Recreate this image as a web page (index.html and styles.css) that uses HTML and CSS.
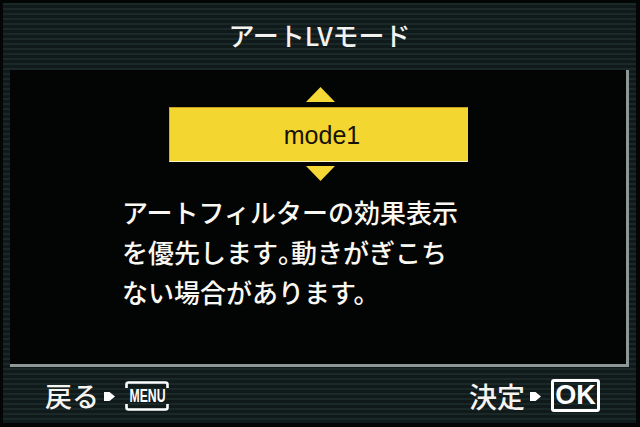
FILE: index.html
```html
<!DOCTYPE html>
<html lang="ja">
<head>
<meta charset="utf-8">
<link rel="stylesheet" href="styles.css">
</head>
<body>
<div class="screen">
  <div class="header">
    <div class="title">アートLVモード</div>
  </div>
  <div class="panel">
    <svg class="tri tri-up" width="29" height="15" viewBox="0 0 29 15"><polygon points="14.5,0 29,15 0,15" fill="#f5d836"/></svg>
    <div class="selector"><span class="sel-text">mode1</span></div>
    <svg class="tri tri-down" width="29" height="15" viewBox="0 0 29 15"><polygon points="0,0 29,0 14.5,15" fill="#f5d836"/></svg>
    <div class="desc">
      <div class="line">アートフィルターの効果表示</div>
      <div class="line">を優先します<span class="half">。</span>動きがぎこち</div>
      <div class="line">ない場合があります。</div>
    </div>
  </div>
  <div class="footer">
    <div class="hint hint-left">
      <span class="hint-label back">戻る</span>
      <svg class="arrow" width="11" height="13" viewBox="0 0 11 13"><polygon points="0,2 5.5,2 11,6.5 5.5,11 0,11" fill="#fff"/></svg>
      <span class="menu-icon">
        <svg class="menu-frame" width="44" height="30" viewBox="0 0 44 30"><path d="M1.5 7 V3.5 Q1.5 1.5 3.5 1.5 H40.5 Q42.5 1.5 42.5 3.5 V7 M1.5 23 V26.5 Q1.5 28.5 3.5 28.5 H40.5 Q42.5 28.5 42.5 26.5 V23" fill="none" stroke="#fff" stroke-width="2.6"/></svg>
        <span class="menu-text">MENU</span>
      </span>
    </div>
    <div class="hint hint-right">
      <span class="hint-label ok-label">決定</span>
      <svg class="arrow" width="11" height="13" viewBox="0 0 11 13"><polygon points="0,2 5.5,2 11,6.5 5.5,11 0,11" fill="#fff"/></svg>
      <span class="ok-icon">OK</span>
    </div>
  </div>
</div>
</body>
</html>
```

FILE: styles.css
```css
html, body {
  margin: 0;
  padding: 0;
  background: #040606;
}

body {
  width: 640px;
  height: 427px;
  overflow: hidden;
  font-family: "Noto Sans CJK JP", "Noto Sans", sans-serif;
  font-weight: 500;
  color: #f6f4f0;
}

.screen {
  margin: 3px 4px 0 3px;
  width: 633px;
  height: 420px;
  display: flex;
  flex-direction: column;
  background: repeating-linear-gradient(to bottom, #1b2828 0, #1b2828 2px, #111a1a 2px, #111a1a 5px);
}

.header {
  height: 67px;
  display: flex;
  align-items: center;
  justify-content: center;
}

.title {
  font-size: 26px;
  line-height: 30px;
  margin-top: -4px;
  color: #f2f2f0;
}

.panel {
  margin-left: 7px;
  width: 616px;
  height: 294px;
  background: #030404;
  border-right: 3px solid #8e9898;
  border-bottom: 3px solid #8e9898;
  display: flex;
  flex-direction: column;
  align-items: center;
}

.tri {
  display: block;
}

.tri-up {
  margin-top: 17px;
  margin-left: 4px;
}

.selector {
  margin-top: 5px;
  width: 297px;
  height: 53px;
  background: #f4d631;
  border-top: 1px solid #c99b1e;
  border-bottom: 1px solid #fff6c8;
  border-left: 1px solid #d7ad22;
  border-right: 1px solid #c8d0cf;
  display: flex;
  align-items: center;
  justify-content: center;
}

.sel-text {
  font-family: "Liberation Sans", "DejaVu Sans", sans-serif;
  font-weight: normal;
  font-size: 25px;
  color: #17130a;
  margin-left: 8px;
  margin-top: 1px;
}

.tri-down {
  margin-top: 4px;
  margin-left: 4px;
}

.desc {
  align-self: flex-start;
  margin-left: 112px;
  margin-top: 11px;
  font-size: 26px;
  line-height: 40px;
  color: #faf8f2;
}

.line {
  white-space: nowrap;
}

.half {
  font-feature-settings: "halt" 1;
}

.footer {
  flex: 1;
  display: flex;
  align-items: center;
  justify-content: space-between;
  padding: 0 36px 0 42px;
}

.hint {
  display: flex;
  align-items: center;
}

.hint-label {
  font-size: 27px;
  line-height: 32px;
  margin-top: 2px;
}

.ok-label {
  font-size: 28px;
}

.arrow {
  display: block;
  margin-left: 5px;
  margin-top: 2px;
}

.menu-icon {
  position: relative;
  width: 44px;
  height: 30px;
  margin-left: 10px;
  margin-top: 2px;
  display: flex;
  align-items: center;
  justify-content: center;
}

.menu-frame {
  position: absolute;
  left: 0;
  top: 0;
}

.menu-text {
  font-family: "Liberation Sans", "DejaVu Sans", sans-serif;
  font-weight: bold;
  font-size: 18px;
  line-height: 18px;
  color: #fff;
  display: inline-block;
  transform: scaleX(0.68);
}

.ok-icon {
  margin-left: 10px;
  margin-top: 1px;
  width: 43px;
  height: 27px;
  border: 3px solid #fff;
  border-radius: 3px;
  font-family: "Liberation Sans", "DejaVu Sans", sans-serif;
  font-weight: bold;
  font-size: 27px;
  line-height: 27px;
  color: #fff;
  display: flex;
  align-items: center;
  justify-content: center;
}
```
